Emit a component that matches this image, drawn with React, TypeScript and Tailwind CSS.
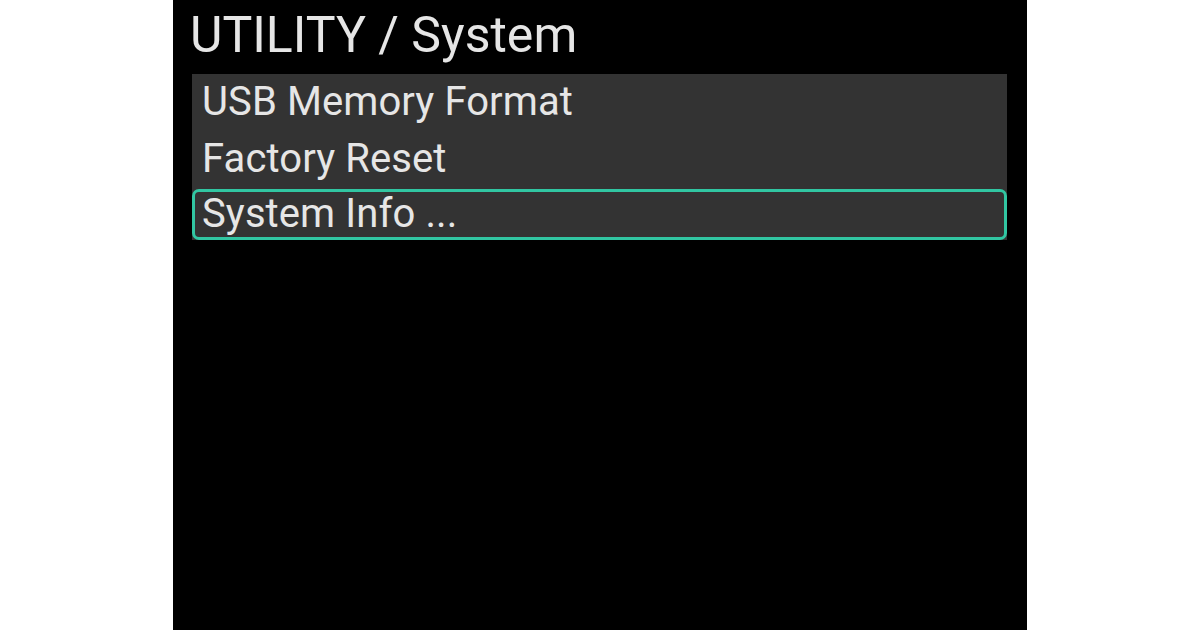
import React from "react";

export default function App() {
  return (
    <div className="w-[1200px] h-[630px] bg-white flex justify-center">
      <div
        className="w-[854px] h-[630px] bg-black flex flex-col"
        style={{ fontFamily: "Roboto, 'Liberation Sans', sans-serif" }}
      >
        <div className="h-[74px] pl-[17px] pt-[10px] text-[50px] leading-[50px] text-[#e6e6e6]">
          UTILITY / System
        </div>
        <div className="ml-[19px] w-[815px] bg-[#333333] flex flex-col text-[40px] text-[#e6e6e6]">
          <div className="h-[56px] leading-[56px] pl-[10px] tracking-[0.1px]">USB Memory Format</div>
          <div className="h-[56px] leading-[58px] pl-[10px] tracking-[0.1px]">Factory Reset</div>
          <div className="mt-[3px] h-[51px] border-[3px] border-[#31c6a2] rounded-[7px] pl-[7px] leading-[44px] tracking-[0.1px]">
            System Info ...
          </div>
        </div>
      </div>
    </div>
  );
}
